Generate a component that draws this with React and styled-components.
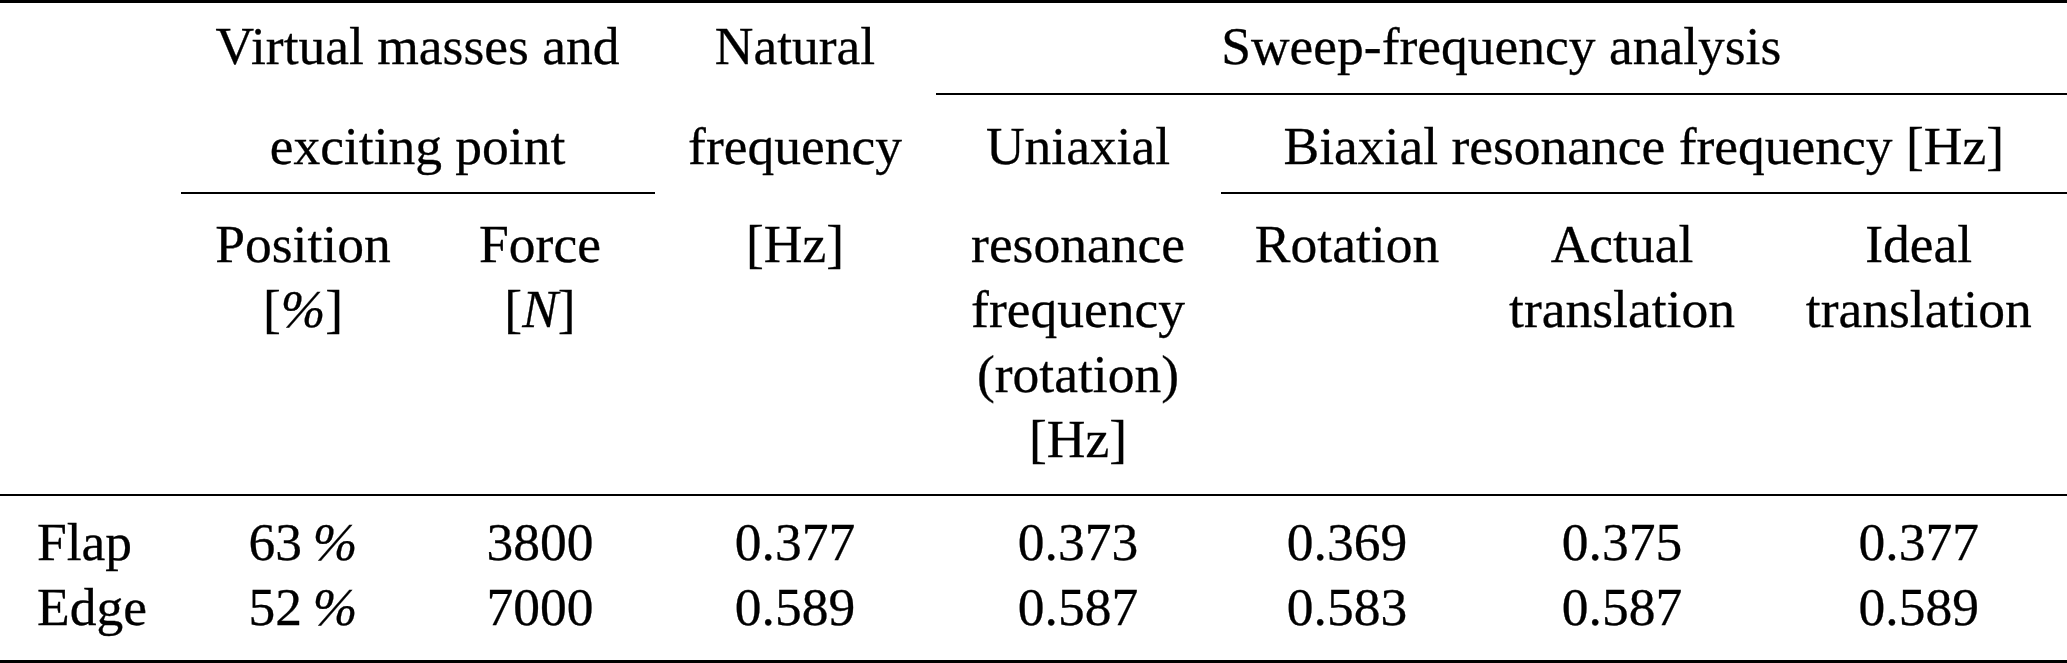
import styled, { createGlobalStyle } from 'styled-components';

const GlobalStyle = createGlobalStyle`
  html, body {
    margin: 0;
    padding: 0;
    background: #fff;
  }
  body {
    font-family: "Liberation Serif", "Times New Roman", serif;
    color: #000;
  }
`;

const columns = '180.5px 245px 229px 281px 285px 253px 297px 296.5px';

const Table = styled.section`
  width: 2067px;
  border-top: 3px solid #000;
  border-bottom: 3px solid #000;
  font-size: 53.5px;
  line-height: 65px;
  -webkit-text-stroke: 0.3px #000;
`;

const Head = styled.div`
  display: grid;
  grid-template-columns: ${columns};
  grid-template-rows: 92px 99px 300px;
  border-bottom: 2px solid #000;
`;

const Body = styled.div`
  display: grid;
  grid-template-columns: ${columns};
  padding: 14px 0 20px;
`;

const Cell = styled.div`
  grid-column: span ${p => p.$span || 1};
  padding-top: ${p => p.$top || 0}px;
  text-align: ${p => p.$left ? 'left' : 'center'};
  padding-left: ${p => p.$left ? '37px' : '0'};
  white-space: nowrap;
  border-bottom: ${p => p.$rule ? '2px solid #000' : 'none'};
  box-sizing: border-box;
`;

const Math = styled.i`
  font-style: italic;
`;

const Lines = ({ items }) =>
  items.map((t, i) => (
    <span key={i}>
      {i > 0 && <br />}
      {t}
    </span>
  ));

const rows = [
  ['Flap', '63', '3800', '0.377', '0.373', '0.369', '0.375', '0.377'],
  ['Edge', '52', '7000', '0.589', '0.587', '0.583', '0.587', '0.589'],
];

export default function App() {
  return (
    <>
      <GlobalStyle />
      <Table>
        <Head>
          <Cell $top={11} />
          <Cell $top={11} $span={2}>Virtual masses and</Cell>
          <Cell $top={11}>Natural</Cell>
          <Cell $top={11} $span={4} $rule>Sweep-frequency analysis</Cell>

          <Cell $top={19} />
          <Cell $top={19} $span={2} $rule>exciting point</Cell>
          <Cell $top={19}>frequency</Cell>
          <Cell $top={19}>Uniaxial</Cell>
          <Cell $top={19} $span={3} $rule>Biaxial resonance frequency [Hz]</Cell>

          <Cell $top={18} />
          <Cell $top={18}>
            <Lines items={['Position', <>[<Math>%</Math>]</>]} />
          </Cell>
          <Cell $top={18}>
            <Lines items={['Force', <>[<Math>N</Math>]</>]} />
          </Cell>
          <Cell $top={18}>[Hz]</Cell>
          <Cell $top={18}>
            <Lines items={['resonance', 'frequency', '(rotation)', '[Hz]']} />
          </Cell>
          <Cell $top={18}>Rotation</Cell>
          <Cell $top={18}>
            <Lines items={['Actual', 'translation']} />
          </Cell>
          <Cell $top={18}>
            <Lines items={['Ideal', 'translation']} />
          </Cell>
        </Head>
        <Body>
          {rows.map(r =>
            r.map((v, i) => (
              <Cell key={r[0] + i} $left={i === 0}>
                {i === 1 ? <>{v}{'\u2009'}<Math>%</Math></> : v}
              </Cell>
            ))
          )}
        </Body>
      </Table>
    </>
  );
}
